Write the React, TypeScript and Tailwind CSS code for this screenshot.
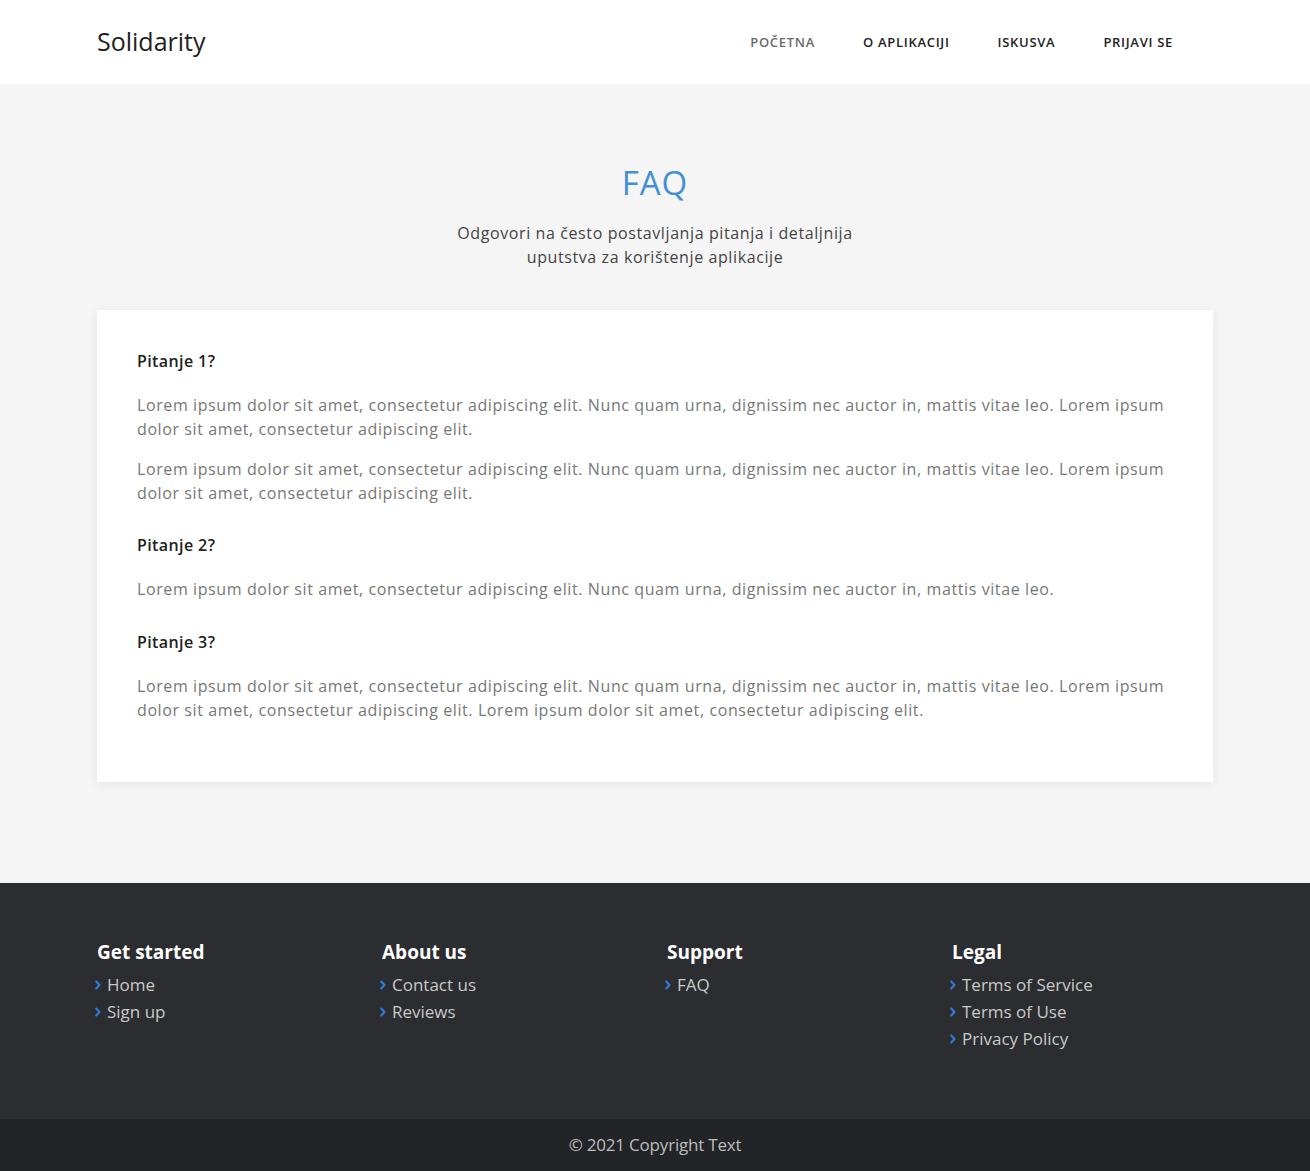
import React from "react";

const font = { fontFamily: '"Open Sans", "Liberation Sans", sans-serif' };

function Chevron() {
  return (
    <svg width="6" height="10" viewBox="0 0 6 10" className="shrink-0">
      <path d="M1.2 1.5 L4.5 5 L1.2 8.5" fill="none" stroke="#2f7fe0" strokeWidth="2" strokeLinecap="round" strokeLinejoin="round" />
    </svg>
  );
}

const LOREM_A =
  "Lorem ipsum dolor sit amet, consectetur adipiscing elit. Nunc quam urna, dignissim nec auctor in, mattis vitae leo. Lorem ipsum dolor sit amet, consectetur adipiscing elit.";
const LOREM_B =
  "Lorem ipsum dolor sit amet, consectetur adipiscing elit. Nunc quam urna, dignissim nec auctor in, mattis vitae leo.";
const LOREM_C =
  "Lorem ipsum dolor sit amet, consectetur adipiscing elit. Nunc quam urna, dignissim nec auctor in, mattis vitae leo. Lorem ipsum dolor sit amet, consectetur adipiscing elit. Lorem ipsum dolor sit amet, consectetur adipiscing elit.";

const cols = [
  { title: "Get started", links: ["Home", "Sign up"] },
  { title: "About us", links: ["Contact us", "Reviews"] },
  { title: "Support", links: ["FAQ"] },
  { title: "Legal", links: ["Terms of Service", "Terms of Use", "Privacy Policy"] },
];

export default function App() {
  return (
    <div className="min-h-screen bg-white" style={font}>
      <header className="h-[84px] bg-white">
        <div className="mx-auto flex h-full w-[1116px] items-center justify-between">
          <a className="text-[25px] font-normal text-[#222]">Solidarity</a>
          <nav className="mr-[16px] flex pt-[2px]">
            {["POČETNA", "O APLIKACIJI", "ISKUSVA", "PRIJAVI SE"].map((n, i) => (
              <a
                key={n}
                className={
                  "px-[24px] text-[13px] font-semibold tracking-[0.7px] " +
                  (i === 0 ? "text-[#6b6b6b]" : "text-[#222]")
                }
              >
                {n}
              </a>
            ))}
          </nav>
        </div>
      </header>

      <main className="bg-[#f5f5f5] pb-[101px] pt-[79px]">
        <div className="mx-auto w-[1116px]">
          <h1 className="text-center text-[33px] font-normal leading-[40px] tracking-[1px] text-[#4390d6]">FAQ</h1>
          <p className="mx-auto mt-[18px] w-[420px] text-center text-[16px] leading-[24px] tracking-[0.6px] text-[#444]">
            Odgovori na često postavljanja pitanja i detaljnija uputstva za korištenje aplikacije
          </p>

          <div className="mt-[41px] bg-white px-[40px] pb-[60px] pt-[39px] shadow-[0_2px_10px_rgba(0,0,0,0.07)]">
            <h3 className="text-[16px] font-semibold leading-[24px] tracking-[0.4px] text-[#222]">Pitanje 1?</h3>
            <p className="mt-[20px] text-[16px] leading-[24px] tracking-[0.6px] text-[#777]">{LOREM_A}</p>
            <p className="mt-[16px] text-[16px] leading-[24px] tracking-[0.6px] text-[#777]">{LOREM_A}</p>

            <h3 className="mt-[28px] text-[16px] font-semibold leading-[24px] tracking-[0.4px] text-[#222]">Pitanje 2?</h3>
            <p className="mt-[20px] text-[16px] leading-[24px] tracking-[0.6px] text-[#777]">{LOREM_B}</p>

            <h3 className="mt-[29px] text-[16px] font-semibold leading-[24px] tracking-[0.4px] text-[#222]">Pitanje 3?</h3>
            <p className="mt-[20px] text-[16px] leading-[24px] tracking-[0.6px] text-[#777]">{LOREM_C}</p>
          </div>
        </div>
      </main>

      <footer className="bg-[#2b2d30] pb-[67px] pt-[57px]">
        <div className="mx-auto grid w-[1116px] grid-cols-[285px_285px_285px_261px]">
          {cols.map((c) => (
            <div key={c.title}>
              <h4 className="text-[19px] font-bold leading-[24px] text-white">{c.title}</h4>
              <ul className="mt-[7px] flex flex-col">
                {c.links.map((l) => (
                  <li key={l} className="-ml-[2px] flex h-[27px] items-center gap-[6px]">
                    <Chevron />
                    <span className="text-[17px] text-[#c9c9c9]">{l}</span>
                  </li>
                ))}
              </ul>
            </div>
          ))}
        </div>
      </footer>
      <div className="flex h-[52px] items-center justify-center bg-[#222427]">
        <span className="text-[17px] tracking-[-0.2px] text-[#bdbdbd]">© 2021 Copyright Text</span>
      </div>
    </div>
  );
}
